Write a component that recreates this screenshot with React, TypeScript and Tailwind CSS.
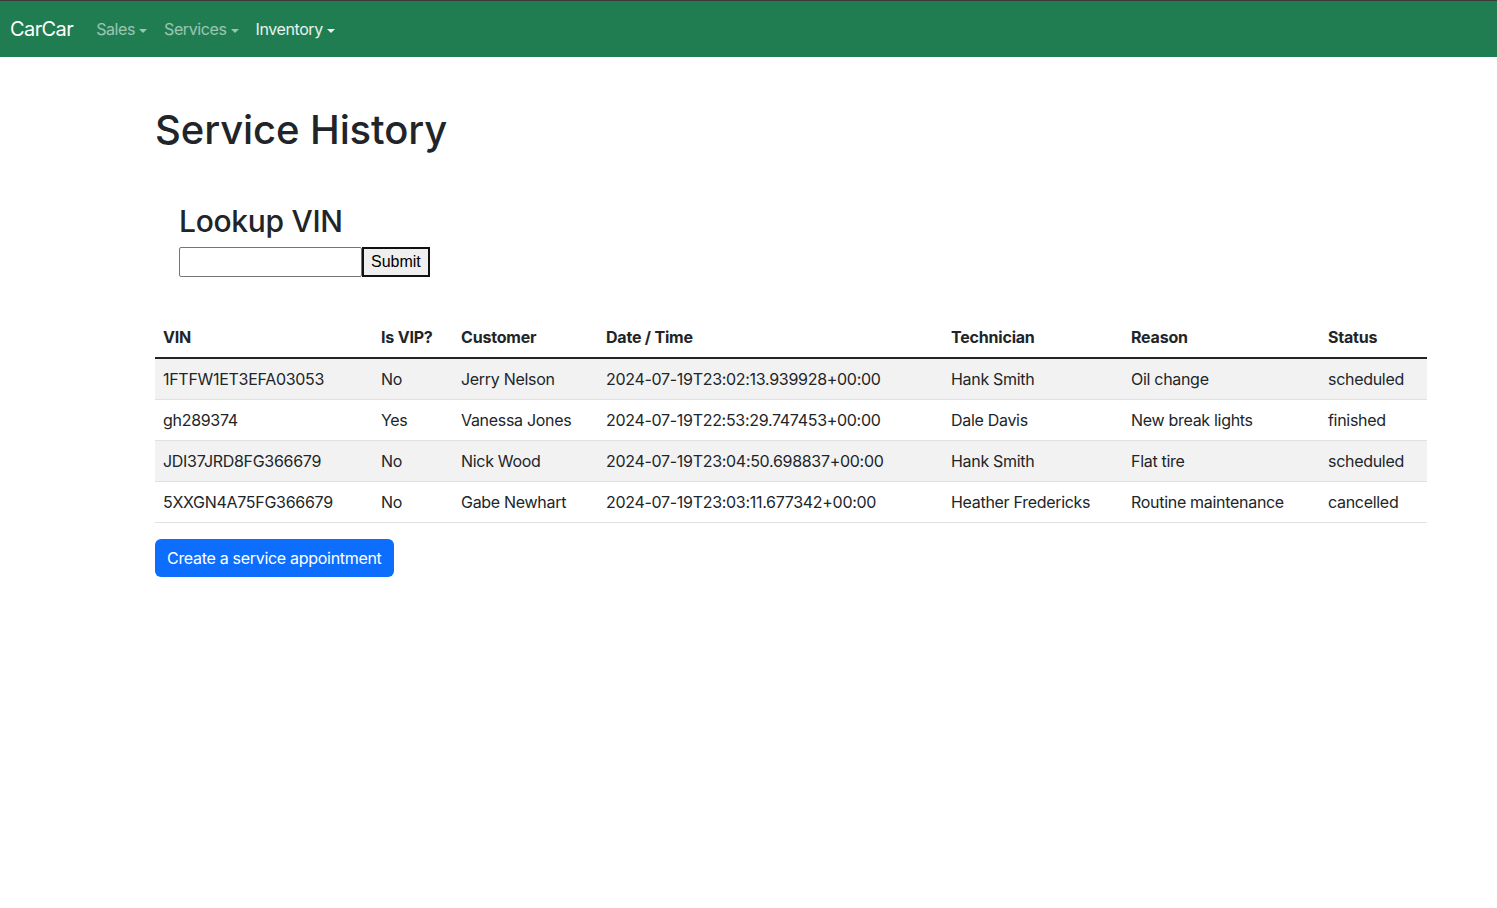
const rows = [
  { vin: '1FTFW1ET3EFA03053', vip: 'No', customer: 'Jerry Nelson', date: '2024-07-19T23:02:13.939928+00:00', tech: 'Hank Smith', reason: 'Oil change', status: 'scheduled' },
  { vin: 'gh289374', vip: 'Yes', customer: 'Vanessa Jones', date: '2024-07-19T22:53:29.747453+00:00', tech: 'Dale Davis', reason: 'New break lights', status: 'finished' },
  { vin: 'JDI37JRD8FG366679', vip: 'No', customer: 'Nick Wood', date: '2024-07-19T23:04:50.698837+00:00', tech: 'Hank Smith', reason: 'Flat tire', status: 'scheduled' },
  { vin: '5XXGN4A75FG366679', vip: 'No', customer: 'Gabe Newhart', date: '2024-07-19T23:03:11.677342+00:00', tech: 'Heather Fredericks', reason: 'Routine maintenance', status: 'cancelled' },
];

function Caret() {
  return <span className="ml-[4px] inline-block align-middle border-x-[4px] border-t-[4px] border-x-transparent border-t-current" />;
}

export default function App() {
  return (
    <div className="min-h-screen bg-white text-[#212529] font-['Inter','Liberation_Sans',sans-serif]">
      {/* Nav */}
      <nav className="h-[57px] bg-[#1f7d51] border-t border-[#3a3a3a] flex items-center px-[10px]">
        <span className="text-white text-[20px] tracking-[-0.6px] mr-[23px]">CarCar</span>
        <div className="flex items-center gap-[17px] text-[16px] tracking-[-0.4px]">
          <span className="text-white/55">Sales<Caret /></span>
          <span className="text-white/55">Services<Caret /></span>
          <span className="text-white/90">Inventory<Caret /></span>
        </div>
      </nav>

      <main className="ml-[155px] w-[1272px]">
        <h1 className="mt-[49px] text-[40px] font-medium leading-[1.2] tracking-[-0.1px]">Service History</h1>

        {/* Lookup */}
        <div className="mt-[49px] pl-[24px]">
          <h2 className="text-[30px] font-medium leading-[1.2] tracking-[-0.3px]">Lookup VIN</h2>
          <div className="flex mt-[8px]">
            <input className="w-[183px] h-[30px] border border-[#767676] rounded-[2px]" />
            <button className="h-[30px] px-[7px] bg-[#efefef] border-2 border-[#111] text-[16px] text-black font-['Liberation_Sans',sans-serif]">Submit</button>
          </div>
        </div>

        {/* Table */}
        <table className="mt-[40px] w-full text-[16px] tracking-[-0.3px] border-collapse table-fixed">
          <colgroup>
            <col className="w-[218px]" />
            <col className="w-[80px]" />
            <col className="w-[145px]" />
            <col className="w-[345px]" />
            <col className="w-[180px]" />
            <col className="w-[197px]" />
            <col className="w-[107px]" />
          </colgroup>
          <thead>
            <tr className="border-b-2 border-[#212529] text-left tracking-[-0.2px]">
              {['VIN', 'Is VIP?', 'Customer', 'Date / Time', 'Technician', 'Reason', 'Status'].map((h) => (
                <th key={h} className="px-[8px] py-[8px] h-[41px] font-bold">{h}</th>
              ))}
            </tr>
          </thead>
          <tbody>
            {rows.map((r, i) => (
              <tr key={r.vin} className={`border-b border-[#dee2e6] ${i % 2 === 0 ? 'bg-[#f2f2f2]' : 'bg-white'}`}>
                <td className="px-[8px] h-[41px]">{r.vin}</td>
                <td className="px-[8px]">{r.vip}</td>
                <td className="px-[8px]">{r.customer}</td>
                <td className="px-[8px]">{r.date}</td>
                <td className="px-[8px]">{r.tech}</td>
                <td className="px-[8px]">{r.reason}</td>
                <td className="px-[8px]">{r.status}</td>
              </tr>
            ))}
          </tbody>
        </table>

        <button className="mt-[16px] h-[38px] px-[12px] bg-[#0d6efd] text-white text-[16px] rounded-[6px] tracking-[-0.3px]">
          Create a service appointment
        </button>
      </main>
    </div>
  );
}
